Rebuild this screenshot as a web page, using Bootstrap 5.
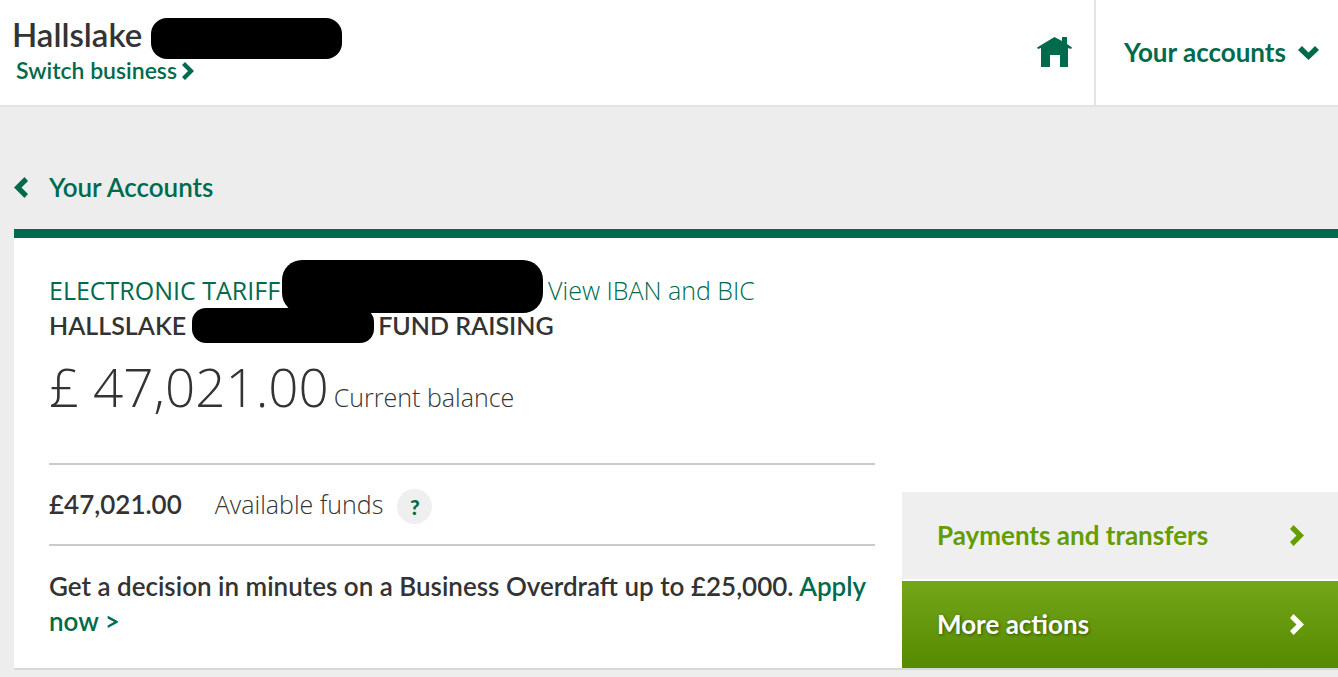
<!DOCTYPE html>
<html lang="en">
<head>
<meta charset="utf-8">
<meta name="viewport" content="width=device-width, initial-scale=1">
<title>Your Accounts</title>
<link href="https://cdn.jsdelivr.net/npm/bootstrap@5.3.0/dist/css/bootstrap.min.css" rel="stylesheet">
<style>
  :root { --brand: #006a4d; --lime: #649d00; --ink: #333; }
  body { font-family: Lato, "Open Sans", sans-serif; font-size: 26px; line-height: 35px; font-weight: 600; color: var(--ink); background: #ededed; }
  a { color: var(--brand); text-decoration: none; }
  a:hover { text-decoration: underline; }
  svg { fill: currentColor; flex: none; display: block; }
  .site-header { height: 107px; border-bottom: 2px solid #e3e3e3; }
  .business { padding: 16px 0 0 12px; }
  .business-name { font-size: 33px; line-height: 36px; font-weight: 600; margin: 0; }
  .switch-link { font-size: 23px; line-height: 35px; padding-left: 4px; gap: 5px; }
  .redacted { background: #000; flex: none; }
  .redacted-name { width: 191px; height: 41px; border-radius: 16px; margin: 2px 0 -7px 9px; }
  .redacted-number { width: 261px; height: 53px; border-radius: 20px; margin: -13px 5px -5px 2px; }
  .redacted-account { width: 182px; height: 35px; border-radius: 14px; margin: 0 4px 0 6px; }
  .home-link { padding: 0 22px; }
  .accounts-toggle { width: 244px; border: 0; border-left: 2px solid #e3e3e3; border-radius: 0; background: none; color: var(--brand); font-weight: 700; padding: 0 19px 0 28px; }
  .page-body { padding: 63px 0 0 14px; }
  .back-link { gap: 20px; margin-bottom: 24px; }
  .account-panel { border-top: 9px solid var(--brand); border-bottom: 2px solid #d8d8d8; }
  .account-details { padding: 35px 27px 29px 35px; }
  .tariff-row { font-family: "Open Sans", sans-serif; font-size: 25px; font-weight: 400; }
  .holder-row { font-size: 25px; }
  .thin { font-family: "Open Sans", sans-serif; font-weight: 300; }
  .caption-text { font-size: 25px; }
  .amount { font-size: 53px; line-height: 64px; }
  .balance { margin: 12px 0 44px; gap: 5px; }
  .funds { border: solid #cbcbcb; border-width: 2px 0; height: 83px; padding-top: 22px; margin-bottom: 23px; }
  .funds-label { margin: 0 14px 0 33px; }
  .help-btn { width: 35px; height: 35px; margin-top: 2px; border: 0; border-radius: 50%; background: #efefef; color: var(--brand); font-size: 21px; line-height: 35px; padding: 0; font-weight: 900; }
  .account-actions { width: 436px; gap: 2px; }
  .action-btn { height: 87px; border: 0; padding: 0 34px 0 35px; font-weight: 700; }
  .action-light { background: #efefef; color: var(--lime); }
  .action-lime { background: linear-gradient(#74a619, #568a00); color: #fff; text-shadow: 1px 1px 3px #335500; }
</style>
</head>
<body>
<header class="site-header bg-white d-flex justify-content-between">
  <div class="business">
    <div class="d-flex align-items-start">
      <h1 class="business-name">Hallslake</h1>
      <span class="redacted redacted-name"></span>
    </div>
    <a class="switch-link d-inline-flex align-items-center" href="#">Switch business
      <svg width="12" height="18" viewBox="0 0 12 18"><path d="M3 0 12 9 3 18 0 15 6 9 0 3z"/></svg>
    </a>
  </div>
  <nav class="d-flex align-items-stretch">
    <a class="home-link d-flex align-items-center" href="#" aria-label="Home">
      <svg width="35" height="31" viewBox="0 0 35 31"><path d="M17.500 0 25 4V0H30V7L35 10.500 34 12 31 11V30H23V18H13V30H4V11L1 12 0 10.500z"/></svg>
    </a>
    <button class="accounts-toggle d-flex align-items-center justify-content-between" type="button">Your accounts
      <svg width="21" height="14" viewBox="0 0 21 14"><path d="M0 4 4 0 10.500 6.500 17 0 21 4 10.500 14z"/></svg>
    </button>
  </nav>
</header>

<main class="page-body">
  <a class="back-link d-inline-flex align-items-center" href="#">
    <svg width="15" height="21" viewBox="0 0 15 21"><path d="M10.500 0 0 10.500 10.500 21 14 17 7.500 10.500 14 4z"/></svg>
    Your Accounts
  </a>
  <section class="account-panel bg-white d-flex">
    <div class="account-details flex-grow-1">
      <div class="tariff-row d-flex align-items-end">
        <a href="#">ELECTRONIC TARIFF</a>
        <span class="redacted redacted-number"></span>
        <a class="thin" href="#">View IBAN and BIC</a>
      </div>
      <div class="holder-row d-flex">
        <span>HALLSLAKE</span>
        <span class="redacted redacted-account"></span>
        <span>FUND RAISING</span>
      </div>
      <div class="balance thin d-flex align-items-baseline">
        <span class="amount">£ 47,021.00</span>
        <span class="caption-text">Current balance</span>
      </div>
      <div class="funds d-flex align-items-start">
        <span>£47,021.00</span>
        <span class="funds-label thin caption-text">Available funds</span>
        <button class="help-btn" type="button" aria-label="Help with available funds">?</button>
      </div>
      <p class="mb-0">Get a decision in minutes on a Business Overdraft up to £25,000. <a href="#">Apply now &gt;</a></p>
    </div>
    <div class="account-actions d-flex flex-column justify-content-end flex-shrink-0">
      <button class="action-btn action-light d-flex align-items-center justify-content-between" type="button">Payments and transfers
        <svg width="14" height="21" viewBox="0 0 14 21"><path d="M3.500 0 14 10.500 3.500 21 0 17 6.500 10.500 0 4z"/></svg>
      </button>
      <button class="action-btn action-lime d-flex align-items-center justify-content-between" type="button">More actions
        <svg width="14" height="21" viewBox="0 0 14 21"><path d="M3.500 0 14 10.500 3.500 21 0 17 6.500 10.500 0 4z"/></svg>
      </button>
    </div>
  </section>
</main>
<script src="https://cdn.jsdelivr.net/npm/bootstrap@5.3.0/dist/js/bootstrap.bundle.min.js"></script>
</body>
</html>
